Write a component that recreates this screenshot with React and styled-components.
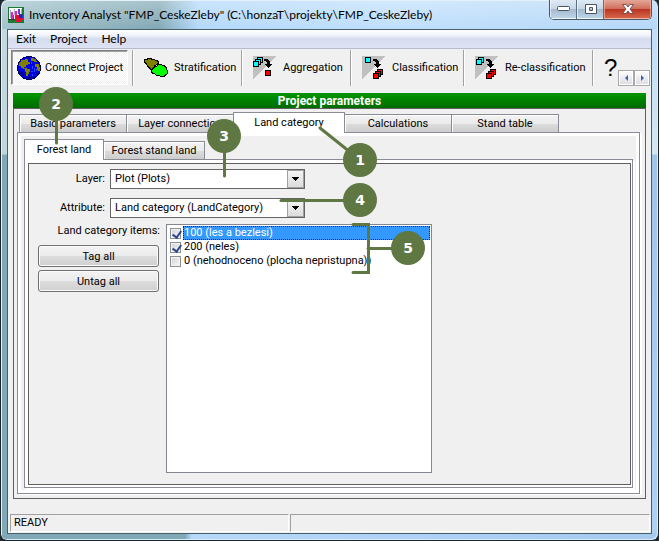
import { useState } from 'react';
import styled, { createGlobalStyle, css } from 'styled-components';

const tools = [
    { label: 'Stratification', icon: 'strata', width: 109 },
    { label: 'Aggregation', icon: 'aggregate', width: 109 },
    { label: 'Classification', icon: 'classify', width: 113 },
    { label: 'Re-classification', icon: 'reclassify', width: 129 },
];

const mainTabs = ['Basic parameters', 'Layer connection', 'Land category', 'Calculations', 'Stand table'];

const landItems = [
    { id: 'les', label: '100 (les a bezlesi)', checked: true },
    { id: 'neles', label: '200 (neles)', checked: true },
    { id: 'nehodnoceno', label: '0 (nehodnoceno (plocha nepristupna))', checked: false },
];

const marks = [
    { n: 1, x: 360, y: 160, line: 'M320 128 L360 160' },
    { n: 2, x: 56, y: 104, line: 'M56.5 104 V143' },
    { n: 3, x: 224, y: 136, line: 'M224.5 136 V176' },
    { n: 4, x: 360, y: 200, line: 'M281 200.5 H360' },
    { n: 5, x: 408, y: 248, line: 'M353 224.5 H368.5 V272.5 H353 M368 248.5 H408' },
];

const AppIcon = () => (
    <svg width="16" height="16" viewBox="0 0 16 16" shapeRendering="crispEdges" aria-hidden="true">
        <path fill="#1c7a34" d="M0 0h16v16H0z" />
        <path fill="#fff" d="M1 1h13v11H1z" />
        <path fill="#b8a8c8" d="M2 3h1v8H2zM6 2h1v6H6zM13 2h1v5h-1z" />
        <path fill="#e020d0" d="M3 5h2v7H3zM7 4h2v5H7z" />
        <path fill="#6a3fc0" d="M10 2h2v5h-2zM5 8h1v4H5z" />
        <path fill="#e01030" d="M8 8h4v7H8zM7 9h8v4H7zM9 13h5v2H9z" />
        <path fill="#1a2fc0" d="M11 7h3v1h1v3h-4z" />
        <path fill="#16421f" d="M0 12h7v1H0z" />
    </svg>
);

const GlobeIcon = () => (
    <svg width="24" height="24" viewBox="0 0 24 24" shapeRendering="crispEdges" aria-hidden="true">
        <circle cx="12" cy="12" r="11.5" fill="#0000e0" stroke="#000060" />
        <path fill="#000090" d="M10 1h3v2h-3zM3 16h3v2H3zM11 20h3v3h-3zM19 17h2v2h-2zM5 18h2v2H5z" />
        <path fill="#2848ff" d="M15 10h1v3h-1zM17 12h1v4h-1zM14 15h2v1h-2zM19 13h1v2h-1zM15 18h1v2h-1zM14 6h1v2h-1z" />
        <path fill="#808000" d="M4 4h4V3h3v3h2v2h-2v1h-2v2H7v1h3v1h3v3h-1v2h-1v2H9v-4H8v-3H6v-1H4v-2H2V7h1V6h1z" />
        <path fill="#808000" d="M14 2h3v1h2v2h1v1h-3V5h-3zM18 8h4v3h1v4h-2v-1h-1v-3h-2z" />
    </svg>
);

const StrataIcon = () => (
    <svg width="24" height="20" viewBox="0 0 24 20" shapeRendering="crispEdges" aria-hidden="true">
        <path fill="#808000" stroke="#000" d="M.5 1.500h3v-1h4v1h3l1 1h2l1 2-1 2-3 1-1 3-1 1H6.500l-1-2-2-1-1-3-2-1z" />
        <path fill="#0f0" stroke="#000" d="M7.500 11.500l2-1 1-2h2l2-2h3l1 1h2l1 2h1v2l1 1v3l-1 1h-1v1l-2 1h-3l-1-1h-3l-2-2h-2l-1-2z" />
    </svg>
);

const Square = ({ x, y, fill }) => (
    <rect x={x + 0.5} y={y + 0.5} width="5" height="5" fill={fill} stroke="#000" />
);

const FlowIcon = ({ from, to }) => (
    <svg width="24" height="24" viewBox="0 0 24 24" shapeRendering="crispEdges" aria-hidden="true">
        <path fill="#c0c0c0" d="M0 0h23L0 23z" />
        {from.map(([x, y]) => <Square key={`${x}-${y}`} x={x} y={y} fill="#0ff" />)}
        <path fill="#000" d="M11 3h4v1h1v1h1v3h2v1h-1v1h-1v1h-1v1h-1v-1h-1v-1h-1V9h-1V8h2V6h-1V5h-2z" />
        {to.map(([x, y]) => <Square key={`${x}-${y}`} x={x} y={y} fill="#f00" />)}
    </svg>
);

const ToolIcon = ({ name }) => {
    if (name === 'strata') return <StrataIcon />;
    if (name === 'aggregate') return <FlowIcon from={[[4, 1], [2, 3], [0, 5]]} to={[[12, 14]]} />;
    if (name === 'classify') return <FlowIcon from={[[3, 1]]} to={[[15, 13], [13, 15], [11, 17]]} />;
    return <FlowIcon from={[[3, 1], [1, 3]]} to={[[15, 13], [13, 15], [11, 17]]} />;
};

const DropDown = ({ id, label, value }) => (
    <FieldRow>
        <FieldLabel htmlFor={id}>{label}</FieldLabel>
        <SelectBox>
            <Select id={id} defaultValue={value}>
                <option value={value}>{value}</option>
            </Select>
            <SelectArrow aria-hidden="true">
                <svg width="7" height="4" viewBox="0 0 7 4" shapeRendering="crispEdges">
                    <path d="M0 0h7v1H6v1H5v1H4v1H3V3H2V2H1V1H0z" />
                </svg>
            </SelectArrow>
        </SelectBox>
    </FieldRow>
);

const App = () => {
    const [items, setItems] = useState(landItems);
    const [selected, setSelected] = useState('les');

    const tagAll = (checked) => setItems(items.map((item) => ({ ...item, checked })));
    const toggle = (id) => {
        setSelected(id);
        setItems(items.map((item) => (item.id === id ? { ...item, checked: !item.checked } : item)));
    };

    return (
        <>
            <GlobalStyle />
            <WindowFrame>
                <TitleBar>
                    <AppIcon />
                    <Title>Inventory Analyst "FMP_CeskeZleby" (C:\honzaT\projekty\FMP_CeskeZleby)</Title>
                    <Caption>
                        <CaptionButton $width={27} aria-label="Minimize">
                            <svg width="13" height="6" viewBox="0 0 13 6">
                                <rect x="0.5" y="0.5" width="12" height="4" rx="1" fill="#fff" stroke="#4a5563" />
                            </svg>
                        </CaptionButton>
                        <CaptionButton $width={27} aria-label="Maximize">
                            <svg width="12" height="11" viewBox="0 0 12 11">
                                <path fill="#fff" fillRule="evenodd" stroke="#4a5563" d="M.5.5h11v9H.5zM4.500 3.500h3v3h-3z" />
                            </svg>
                        </CaptionButton>
                        <CaptionButton $width={47} $close aria-label="Close">
                            <svg width="12" height="11" viewBox="0 0 12 11">
                                <path fill="#fff" stroke="#5b3a3c" strokeWidth="0.8" d="M.5.5h3.500l2 2.500 2-2.500h3.500l-3.500 4.500 3.500 4.500H8l-2-2.500-2 2.500H.5L4 5z" />
                            </svg>
                        </CaptionButton>
                    </Caption>
                </TitleBar>
                <Client>
                    <MenuBar>
                        <MenuItem>Exit</MenuItem>
                        <MenuItem>Project</MenuItem>
                        <MenuItem>Help</MenuItem>
                    </MenuBar>
                    <ToolBar>
                        <PressedTool>
                            <GlobeIcon />
                            Connect Project
                        </PressedTool>
                        {tools.map((tool) => (
                            <Tool key={tool.label} $width={tool.width}>
                                <ToolIcon name={tool.icon} />
                                {tool.label}
                            </Tool>
                        ))}
                        <HelpTool>?</HelpTool>
                        <Scroller>
                            <ScrollButton aria-label="Scroll left">
                                <svg width="3" height="6" viewBox="0 0 3 6"><path fill="#3f5fae" d="M3 0v6L0 3z" /></svg>
                            </ScrollButton>
                            <ScrollButton aria-label="Scroll right">
                                <svg width="3" height="6" viewBox="0 0 3 6"><path fill="#3f5fae" d="M0 0v6l3-3z" /></svg>
                            </ScrollButton>
                        </Scroller>
                    </ToolBar>
                    <Panel>
                        <PanelTitle>Project parameters</PanelTitle>
                        <PanelBody>
                            <TabList role="tablist" $indent={2}>
                                {mainTabs.map((tab) => (
                                    <Tab key={tab} role="tab" $width={108} $active={tab === 'Land category'} aria-selected={tab === 'Land category'}>
                                        {tab}
                                    </Tab>
                                ))}
                            </TabList>
                            <MainPage>
                                <TabList role="tablist">
                                    <Tab role="tab" $width={76} $active aria-selected>Forest land</Tab>
                                    <Tab role="tab" $width={102} aria-selected={false}>Forest stand land</Tab>
                                </TabList>
                                <SubPage>
                                    <Form>
                                        <Fields>
                                            <DropDown id="layer" label="Layer:" value="Plot (Plots)" />
                                            <DropDown id="attribute" label="Attribute:" value="Land category (LandCategory)" />
                                        </Fields>
                                        <Picker>
                                            <Side>
                                                <ListLabel id="items-label">Land category items:</ListLabel>
                                                <PushButton onClick={() => tagAll(true)}>Tag all</PushButton>
                                                <PushButton onClick={() => tagAll(false)}>Untag all</PushButton>
                                            </Side>
                                            <CheckList aria-labelledby="items-label">
                                                {items.map((item) => (
                                                    <CheckRow key={item.id}>
                                                        <CheckBox
                                                            type="checkbox"
                                                            id={item.id}
                                                            checked={item.checked}
                                                            onChange={() => toggle(item.id)}
                                                        />
                                                        <CheckLabel htmlFor={item.id} $selected={item.id === selected}>
                                                            {item.label}
                                                        </CheckLabel>
                                                    </CheckRow>
                                                ))}
                                            </CheckList>
                                        </Picker>
                                    </Form>
                                </SubPage>
                            </MainPage>
                        </PanelBody>
                    </Panel>
                    <StatusBar>
                        <StatusCell $width={279}>READY</StatusCell>
                        <StatusCell />
                    </StatusBar>
                </Client>
                <Marks viewBox="1 0 658 541" width="658" height="541">
                    {marks.map((mark) => (
                        <g key={mark.n}>
                            <path d={mark.line} />
                            <circle cx={mark.x} cy={mark.y} r="17" />
                            <text x={mark.x} y={mark.y + 5}>{mark.n}</text>
                        </g>
                    ))}
                </Marks>
            </WindowFrame>
        </>
    );
}

export default App

const GlobalStyle = createGlobalStyle`
    * {
        box-sizing: border-box;
    }
    body {
        margin: 0;
        background: #1f2a30;
        color: #000;
        font: 11px/14px Roboto, "Liberation Sans", sans-serif;
    }
    button, select, input {
        margin: 0;
        padding: 0;
        color: inherit;
        font: inherit;
    }
`;

const WindowFrame = styled.div`
    position: relative;
    display: flex;
    flex-direction: column;
    min-height: 100vh;
    padding: 0 6px 6px;
    border: 1px solid #1c2529;
    border-top: 0;
    border-radius: 7px;
    background:
        linear-gradient(rgba(255, 255, 255, 0.3), rgba(255, 255, 255, 0)) top / 100% 29px no-repeat,
        linear-gradient(90deg, #a3c3cc, #83a9b5 24%, #b4d9fb 30%, #c0dffc 60%, #b5d7f8) top / 100% 29px no-repeat,
        linear-gradient(90deg, #80a8b6 28%, #b5d8fb 29%, #a6c9ee) bottom / 100% 7px no-repeat,
        linear-gradient(#c5d9df, #bfd5dc 154px, #80a8b6 155px) left / 8px 100% no-repeat,
        linear-gradient(#bcdcfa, #d4e6f2 154px, #9fc4ea 155px, #aed2f6) right / 8px 100% no-repeat,
        #b5d7f8;
    box-shadow: inset 1px 1px 0 #e3f1f8, inset -1px -1px 0 #d7ebfb;
`;

const TitleBar = styled.header`
    display: flex;
    align-items: center;
    height: 29px;
    padding-left: 1px;
`;

const Title = styled.h1`
    flex: 1;
    margin: 0;
    padding-left: 5px;
    overflow: hidden;
    font: 12px/16px Lato, sans-serif;
    white-space: nowrap;
`;

const Caption = styled.div`
    display: flex;
    align-self: flex-start;
    height: 20px;
    border: 1px solid #46596b;
    border-top: 0;
    border-radius: 0 0 5px 5px;
    overflow: hidden;
`;

const CaptionButton = styled.button`
    display: flex;
    align-items: center;
    justify-content: center;
    width: ${(props) => props.$width}px;
    border: 1px solid rgba(255, 255, 255, 0.6);
    border-top: 0;
    background: linear-gradient(#dfeaf5, #c6d6e6 48%, #a4b9ce 50%, #bcd3e8);

    & + & {
        box-shadow: -1px 0 0 #5c7084;
    }

    ${(props) => props.$close && css`
        border-color: rgba(255, 190, 170, 0.6);
        background: linear-gradient(#e3a799, #cf6e5c 48%, #b93220 50%, #d5664a);
    `}
`;

const Client = styled.main`
    display: flex;
    flex: 1;
    flex-direction: column;
    border: 1px solid #46606c;
    background: #f0f0f0;
`;

const MenuBar = styled.nav`
    display: flex;
    height: 19px;
    padding-left: 1px;
    border-bottom: 1px solid #b6bccc;
    background: linear-gradient(#fff, #f0f3fa 30%, #d5dcee 50%, #dde3f3);
`;

const MenuItem = styled.button`
    padding: 0 7px;
    border: 0;
    background: none;
    font: 12px/18px Lato, sans-serif;
`;

const ToolBar = styled.div`
    display: flex;
    height: 38px;
    padding: 1px 1px 1px 3px;
`;

const PressedTool = styled.button`
    display: flex;
    align-items: center;
    gap: 4px;
    width: 117px;
    height: 35px;
    margin-right: 4px;
    padding-left: 5px;
    border: 1px solid #808080;
    border-right-color: #fff;
    border-bottom-color: #fff;
    background: repeating-conic-gradient(#fff 0 25%, #f0f0f0 0 50%) 0 0 / 2px 2px;
    box-shadow: inset 1px 1px 0 #a0a0a0;
    white-space: nowrap;
`;

const Tool = styled.button`
    display: flex;
    align-items: center;
    gap: 6px;
    width: ${(props) => props.$width}px;
    height: 36px;
    padding-left: 11px;
    border: 0;
    border-left: 1px solid #a0a0a0;
    background: none;
    box-shadow: inset 1px 0 0 #fff;
    white-space: nowrap;
`;

const HelpTool = styled(Tool)`
    width: 25px;
    font: 24px/28px "Liberation Sans", sans-serif;
`;

const Scroller = styled.div`
    display: flex;
    align-self: flex-end;
    margin-left: auto;
`;

const ScrollButton = styled.button`
    display: flex;
    align-items: center;
    justify-content: center;
    width: 16px;
    height: 16px;
    border: 1px solid #a9a9a9;
    background: linear-gradient(#fff, #ececf0 50%, #dcdce2);
    box-shadow: inset 0 0 0 1px #fff;
`;

const Panel = styled.section`
    display: flex;
    flex: 1;
    flex-direction: column;
    margin: 6px 5px 15px;
`;

const PanelTitle = styled.h2`
    margin: 0;
    padding-top: 1px;
    background: linear-gradient(#009600, #006a00);
    color: #fff;
    font-size: 12px;
    line-height: 14px;
    text-align: center;
`;

const PanelBody = styled.div`
    display: flex;
    flex: 1;
    flex-direction: column;
    padding: 3px 5px 4px 3px;
    border: 1px solid #606060;
`;

const TabList = styled.div`
    display: flex;
    align-items: flex-end;
    height: 20px;
    padding-left: ${(props) => props.$indent || 0}px;
`;

const Tab = styled.button`
    width: ${(props) => props.$width}px;
    height: 18px;
    padding-top: 1px;
    border: 1px solid #898c95;
    border-bottom: 0;
    background: linear-gradient(#f3f3f3, #ebebeb 50%, #dddddd 51%, #cdcdcd);
    box-shadow: inset 1px 1px 0 #fff;
    white-space: nowrap;

    & + & {
        margin-left: -1px;
    }

    ${(props) => props.$active && css`
        z-index: 1;
        width: ${props.$width + 4}px;
        height: 21px;
        margin-bottom: -1px;
        padding-bottom: 1px;
        background: #fff;
    `}
`;

const MainPage = styled.div`
    display: flex;
    flex: 1;
    flex-direction: column;
    padding: 6px 6px 5px;
    border: 1px solid #898c95;
    box-shadow: inset 0 0 0 3px #fff, 2px 1px 0 #fff;
`;

const SubPage = styled.div`
    display: flex;
    flex: 1;
    padding: 3px 1px 2px 3px;
    border: 1px solid #898c95;
    background: #fff;
    box-shadow: 2px 2px 0 #fff;
`;

const Form = styled.div`
    flex: 1;
    padding: 5px 0;
    border: 1px solid #606060;
    background: #f0f0f0;
`;

const Fields = styled.div`
    display: flex;
    flex-direction: column;
    gap: 9px;
`;

const FieldRow = styled.div`
    display: flex;
    align-items: center;
    gap: 5px;
`;

const FieldLabel = styled.label`
    width: 76px;
    text-align: right;
`;

const SelectBox = styled.div`
    display: flex;
    width: 195px;
    height: 20px;
    border: 1px solid #646464;
    background: #fff;
`;

const Select = styled.select`
    flex: 1;
    min-width: 0;
    padding-left: 4px;
    border: 0;
    background: none;
    appearance: none;
`;

const SelectArrow = styled.span`
    display: flex;
    align-items: center;
    justify-content: center;
    width: 17px;
    border: 1px solid #a0a0a0;
    background: linear-gradient(#f4f4f4, #dcdcdc);
    pointer-events: none;
`;

const Picker = styled.div`
    display: flex;
    gap: 6px;
    margin-top: 6px;
`;

const Side = styled.div`
    display: flex;
    flex-direction: column;
    gap: 3px;
    width: 131px;
    padding-left: 9px;
`;

const ListLabel = styled.span`
    height: 18px;
    text-align: right;
    white-space: nowrap;
`;

const PushButton = styled.button`
    height: 22px;
    margin-right: 1px;
    padding-top: 1px;
    border: 1px solid #707070;
    border-radius: 3px;
    background: linear-gradient(#f3f3f3, #ebebeb 50%, #dddddd 51%, #cfcfcf);
    box-shadow: inset 0 0 0 1px #fbfbfb;
`;

const CheckList = styled.ul`
    width: 266px;
    height: 249px;
    margin: 0;
    padding: 1px 1px 1px 3px;
    border: 1px solid #828790;
    background: #fff;
    list-style: none;
`;

const CheckRow = styled.li`
    display: flex;
    align-items: center;
    gap: 2px;
    height: 14px;
`;

const CheckBox = styled.input`
    width: 11px;
    height: 11px;
    border: 1px solid #8e8f8f;
    background: linear-gradient(135deg, #cfd3d8, #f6f6f6);
    box-shadow: inset 0 0 0 1px #f4f4f4;
    appearance: none;

    &:checked::before {
        content: "";
        display: block;
        width: 4px;
        height: 7px;
        margin-left: 3px;
        border: solid #31478c;
        border-width: 0 2px 2px 0;
        transform: rotate(35deg);
    }
`;

const CheckLabel = styled.label`
    flex: 1;
    padding-left: 1px;
    white-space: nowrap;

    ${(props) => props.$selected && css`
        background: #3399ff;
        color: #fff;
        outline: 1px dotted #3a2000;
        outline-offset: -1px;
    `}
`;

const StatusBar = styled.footer`
    display: flex;
    gap: 1px;
    padding: 0 1px 1px 2px;
`;

const StatusCell = styled.div`
    flex: ${(props) => (props.$width ? `0 0 ${props.$width}px` : '1')};
    height: 18px;
    padding: 1px 0 0 3px;
    border: 1px solid #a0a0a0;
    border-right-color: #fff;
    border-bottom-color: #fff;
`;

/* numbered callouts lie over the whole window */
const Marks = styled.svg`
    position: absolute;
    top: 0;
    left: 0;
    z-index: 2;
    pointer-events: none;

    path {
        fill: none;
        stroke: #5f7843;
        stroke-width: 3;
        stroke-linecap: round;
    }
    circle {
        fill: #5f7843;
    }
    text {
        fill: #fff;
        font: bold 14px "DejaVu Sans", sans-serif;
        text-anchor: middle;
    }
`;
